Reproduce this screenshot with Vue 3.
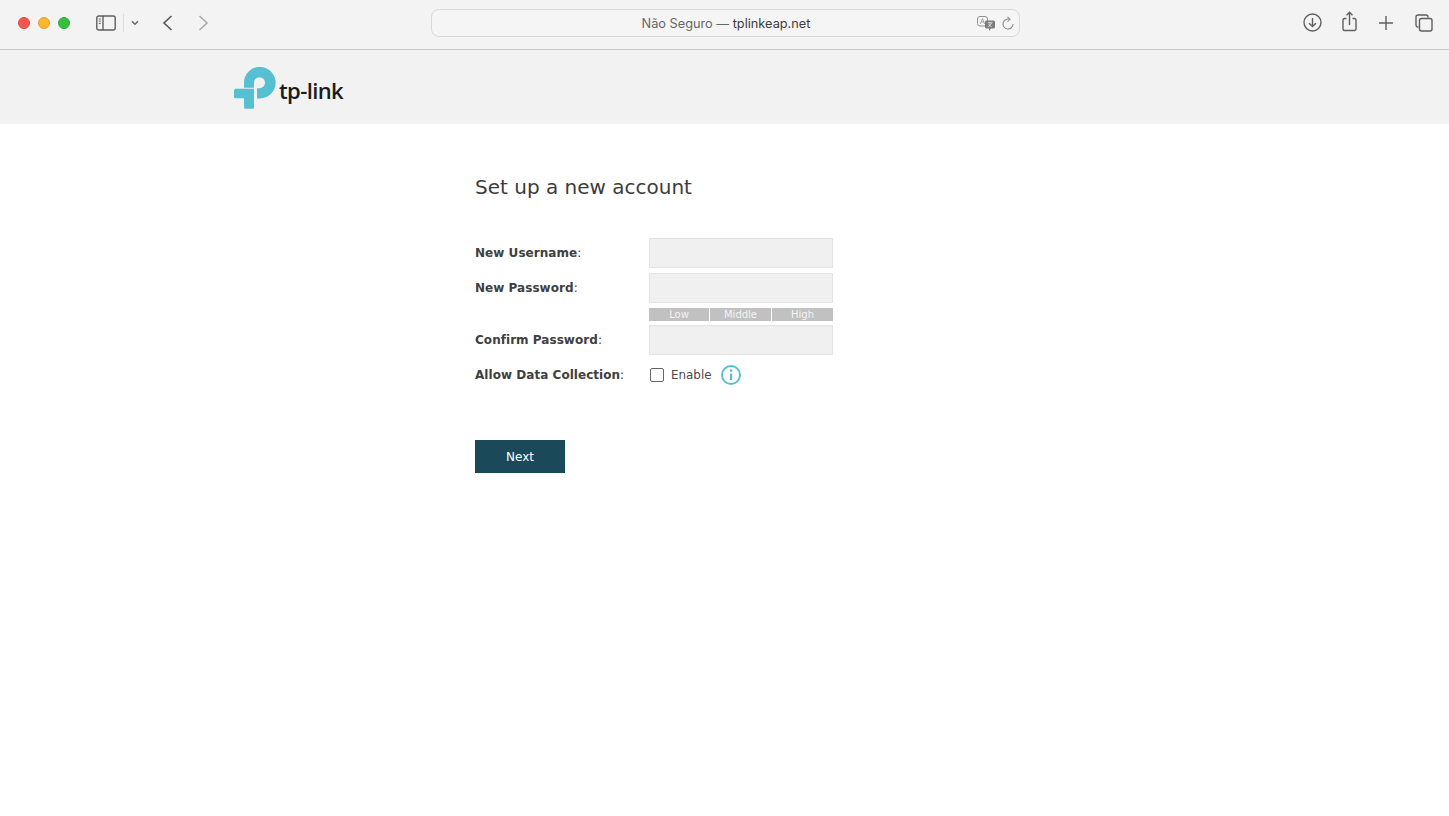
<script setup>
const fields = [
  { label: 'New Username' },
  { label: 'New Password', strength: true },
  { label: 'Confirm Password' },
]
</script>

<template>
  <div class="page">
    <div class="toolbar">
      <div class="traffic">
        <span class="dot red"></span><span class="dot yellow"></span><span class="dot green"></span>
      </div>
      <svg class="ic sidebar" width="20" height="16" viewBox="0 0 20 16" fill="none" stroke="#5f5f5f" stroke-width="1.4">
        <rect x="0.8" y="1" width="18.4" height="14" rx="2" />
        <path d="M7 1v14" />
        <path d="M2.8 4h2M2.8 6.2h2M2.8 8.4h2" stroke-width="1" />
      </svg>
      <span class="sep"></span>
      <svg class="ic chev" width="8" height="6" viewBox="0 0 8 6" fill="none" stroke="#666" stroke-width="1.5">
        <path d="M1 1.2 4 4.2 7 1.2" />
      </svg>
      <svg class="ic back" width="11" height="16" viewBox="0 0 11 16" fill="none" stroke="#555" stroke-width="1.6">
        <path d="M9.5 1 2 8l7.5 7" />
      </svg>
      <svg class="ic fwd" width="11" height="16" viewBox="0 0 11 16" fill="none" stroke="#aaa" stroke-width="1.6">
        <path d="M1.5 1 9 8l-7.500 7" />
      </svg>
      <div class="address">
        <span class="url"><span class="muted">Não Seguro — </span>tplinkeap.net</span>
        <svg class="translate" width="18" height="15" viewBox="0 0 18 15">
          <rect x="0.5" y="0.5" width="10" height="9.500" rx="2.500" fill="none" stroke="#8f8f8f" />
          <path d="M3.300 8 5.500 2.500 7.700 8M4.200 6h2.600" fill="none" stroke="#8f8f8f" stroke-width="0.8" />
          <path d="M9.500 4.500h7a1.500 1.500 0 0 1 1.500 1.500v5a1.500 1.500 0 0 1-1.500 1.500h-2.500L12 15v-2.500H9.500A1.500 1.500 0 0 1 8 11V6a1.500 1.500 0 0 1 1.500-1.500z" fill="#7d7d7d" />
          <path d="M10.800 6.800h4.600M13 5.800v1M11.300 11 14.500 7.200M11.600 8 14.500 11" stroke="#f3f3f3" stroke-width="0.8" fill="none" />
        </svg>
        <svg class="reload" width="12" height="15" viewBox="0 0 12 15" fill="none" stroke="#8f8f8f" stroke-width="1.1">
          <path d="M7.600 3.300A5 5 0 1 0 11 8" />
          <path d="M5.500 0.800 8 3.300 5.500 5.600" />
        </svg>
      </div>
      <div class="right-tools">
        <svg width="19" height="19" viewBox="0 0 19 19" fill="none" stroke="#5f5f5f" stroke-width="1.4">
          <circle cx="9.500" cy="9.500" r="8.500" />
          <path d="M9.500 5v8.500M6 10.200l3.500 3.300 3.500-3.300" />
        </svg>
        <svg class="share" width="15" height="21" viewBox="0 0 15 21" fill="none" stroke="#5f5f5f" stroke-width="1.4">
          <path d="M4.500 7.500H2.500a1.500 1.500 0 0 0-1.500 1.500v9a1.500 1.500 0 0 0 1.500 1.500h10a1.500 1.500 0 0 0 1.500-1.500V9a1.500 1.500 0 0 0-1.500-1.500h-2" />
          <path d="M7.500 14V1.500M4.500 4.300l3-3 3 3" />
        </svg>
        <svg class="plus" width="14" height="14" viewBox="0 0 14 14" fill="none" stroke="#5f5f5f" stroke-width="1.4">
          <path d="M7 0v14M0 7h14" />
        </svg>
        <svg class="tabs" width="18" height="18" viewBox="0 0 18 18" fill="none" stroke="#5f5f5f" stroke-width="1.4">
          <path d="M3.500 13H3a2 2 0 0 1-2-2V3a2 2 0 0 1 2-2h8a2 2 0 0 1 2 2v.500" />
          <rect x="4.500" y="4.500" width="12.500" height="12.500" rx="2" />
        </svg>
      </div>
    </div>

    <header class="brand">
      <svg class="logo-mark" width="42" height="42" viewBox="0 0 42 42">
        <path d="M10 20.800V16A15.800 15.800 0 1 1 25.800 31.500H23V21.200H25.500A5.500 5.500 0 1 0 20 15.700V20.800Z" fill="#56bfd2" />
        <path d="M1.500 21.700H20V40.300A1.500 1.500 0 0 1 18.500 41.800H11.500A1.500 1.500 0 0 1 10 40.300V31.300H1.500A1.500 1.500 0 0 1 0 29.800V23.200A1.500 1.500 0 0 1 1.500 21.700Z" fill="#56bfd2" />
      </svg>
      <span class="wordmark">tp-link</span>
    </header>

    <main class="content">
      <h1 class="title">Set up a new account</h1>
      <form class="form" @submit.prevent>
        <template v-for="f in fields" :key="f.label">
          <div class="row">
            <label class="label"><b>{{ f.label }}</b>:</label>
            <input class="input" type="text" />
          </div>
          <div v-if="f.strength" class="strength">
            <span>Low</span><span>Middle</span><span>High</span>
          </div>
        </template>
        <div class="row check-row">
          <label class="label"><b>Allow Data Collection</b>:</label>
          <span class="box"></span>
          <span class="enable">Enable</span>
          <svg class="info" width="20" height="20" viewBox="0 0 20 20" fill="none" stroke="#56bfd2">
            <circle cx="10" cy="10" r="9" stroke-width="1.9" />
            <path d="M10 8.500v6.500" stroke-width="2.200" />
            <circle cx="10" cy="5.600" r="1.300" fill="#56bfd2" stroke="none" />
          </svg>
        </div>
        <button class="next" type="button">Next</button>
      </form>
    </main>
  </div>
</template>

<style>
html, body { margin: 0; background: #fff; }
</style>

<style scoped>
.page {
  width: 1449px;
  height: 816px;
  overflow: hidden;
  background: #fff;
  font-family: "DejaVu Sans", Verdana, sans-serif;
  color: #404040;
}
.toolbar {
  box-sizing: border-box;
  height: 50px;
  background: #f3f3f3;
  border-bottom: 1px solid #c6c6c6;
  display: flex;
  align-items: center;
  padding-left: 18px;
  padding-bottom: 3px;
}
.traffic { display: flex; gap: 8px; }
.dot { width: 12px; height: 12px; border-radius: 50%; box-sizing: border-box; }
.red { background: #f4574e; border: 1px solid #e0443c; }
.yellow { background: #fbb72f; border: 1px solid #e2a028; }
.green { background: #34c03f; border: 1px solid #2cab36; }
.ic { flex: none; }
.sidebar { margin-left: 26px; }
.sep { width: 1px; height: 18px; background: #dcdcdc; margin-left: 7px; }
.chev { margin-left: 7px; }
.back { margin-left: 23px; }
.fwd { margin-left: 25px; }
.address {
  box-sizing: border-box;
  width: 589px;
  height: 28px;
  margin-left: 222px;
  border: 1px solid #d8d8d8;
  border-radius: 8px;
  background: #f5f5f5;
  position: relative;
  display: flex;
  align-items: center;
  justify-content: center;
}
.url {
  font-family: "Inter", "Liberation Sans", sans-serif;
  font-size: 12.750px;
  color: #3c3c3c;
  margin-left: 1px;
}
.muted { color: #666; }
.translate { position: absolute; right: 24px; top: 6px; }
.reload { position: absolute; right: 5px; top: 6px; }
.right-tools {
  display: flex;
  align-items: center;
  margin-left: 283px;
  margin-top: -1px;
}
.share { margin-left: 20px; margin-top: -2px; }
.plus { margin-left: 22px; margin-top: 1px; }
.tabs { margin-left: 22px; margin-top: 1px; }
.brand {
  height: 74px;
  background: #f2f2f2;
  display: flex;
  align-items: center;
  padding-left: 234px;
}
.logo-mark { margin-top: 2px; }
.wordmark {
  font-family: "Open Sans", "Liberation Sans", sans-serif;
  font-size: 22px;
  font-weight: 600;
  letter-spacing: -0.600px;
  line-height: 26px;
  color: #1c1c1c;
  margin-left: 3px;
  margin-top: 5px;
}
.content {
  width: 500px;
  margin-left: 475px;
  padding-top: 50px;
}
.title {
  margin: 0;
  font-size: 20px;
  font-weight: 400;
  line-height: 26px;
  color: #3c3c3c;
}
.form { margin-top: 38px; }
.row {
  display: flex;
  align-items: center;
  height: 30px;
  margin-bottom: 5px;
}
.label {
  width: 174px;
  flex: none;
  font-size: 12px;
  letter-spacing: 0.040px;
  color: #404040;
}
.label b { font-weight: 700; }
.input {
  box-sizing: border-box;
  width: 184px;
  height: 30px;
  padding: 0;
  background: #f0f0f0;
  border: 1px solid #e2e2e2;
  outline: none;
}
.strength {
  display: grid;
  grid-template-columns: 60px 61px 61px;
  gap: 1px;
  width: 184px;
  margin: 0 0 4px 174px;
}
.strength span {
  height: 13px;
  line-height: 13px;
  background: #c1c1c1;
  color: #f4f4f4;
  font-size: 10px;
  text-align: center;
}
.check-row { margin-bottom: 0; }
.box {
  box-sizing: border-box;
  width: 14px;
  height: 14px;
  margin-left: 1px;
  border: 1px solid #666;
  border-radius: 2px;
  background: #fff;
}
.enable { font-size: 11.900px; margin-left: 7px; color: #4a4a4a; }
.info { margin-left: 9px; }
.next {
  display: block;
  width: 90px;
  height: 33px;
  margin-top: 50px;
  padding: 0;
  border: 0;
  background: #1a4a5a;
  color: #fff;
  font-family: inherit;
  font-size: 12px;
  font-weight: 500;
}
</style>
